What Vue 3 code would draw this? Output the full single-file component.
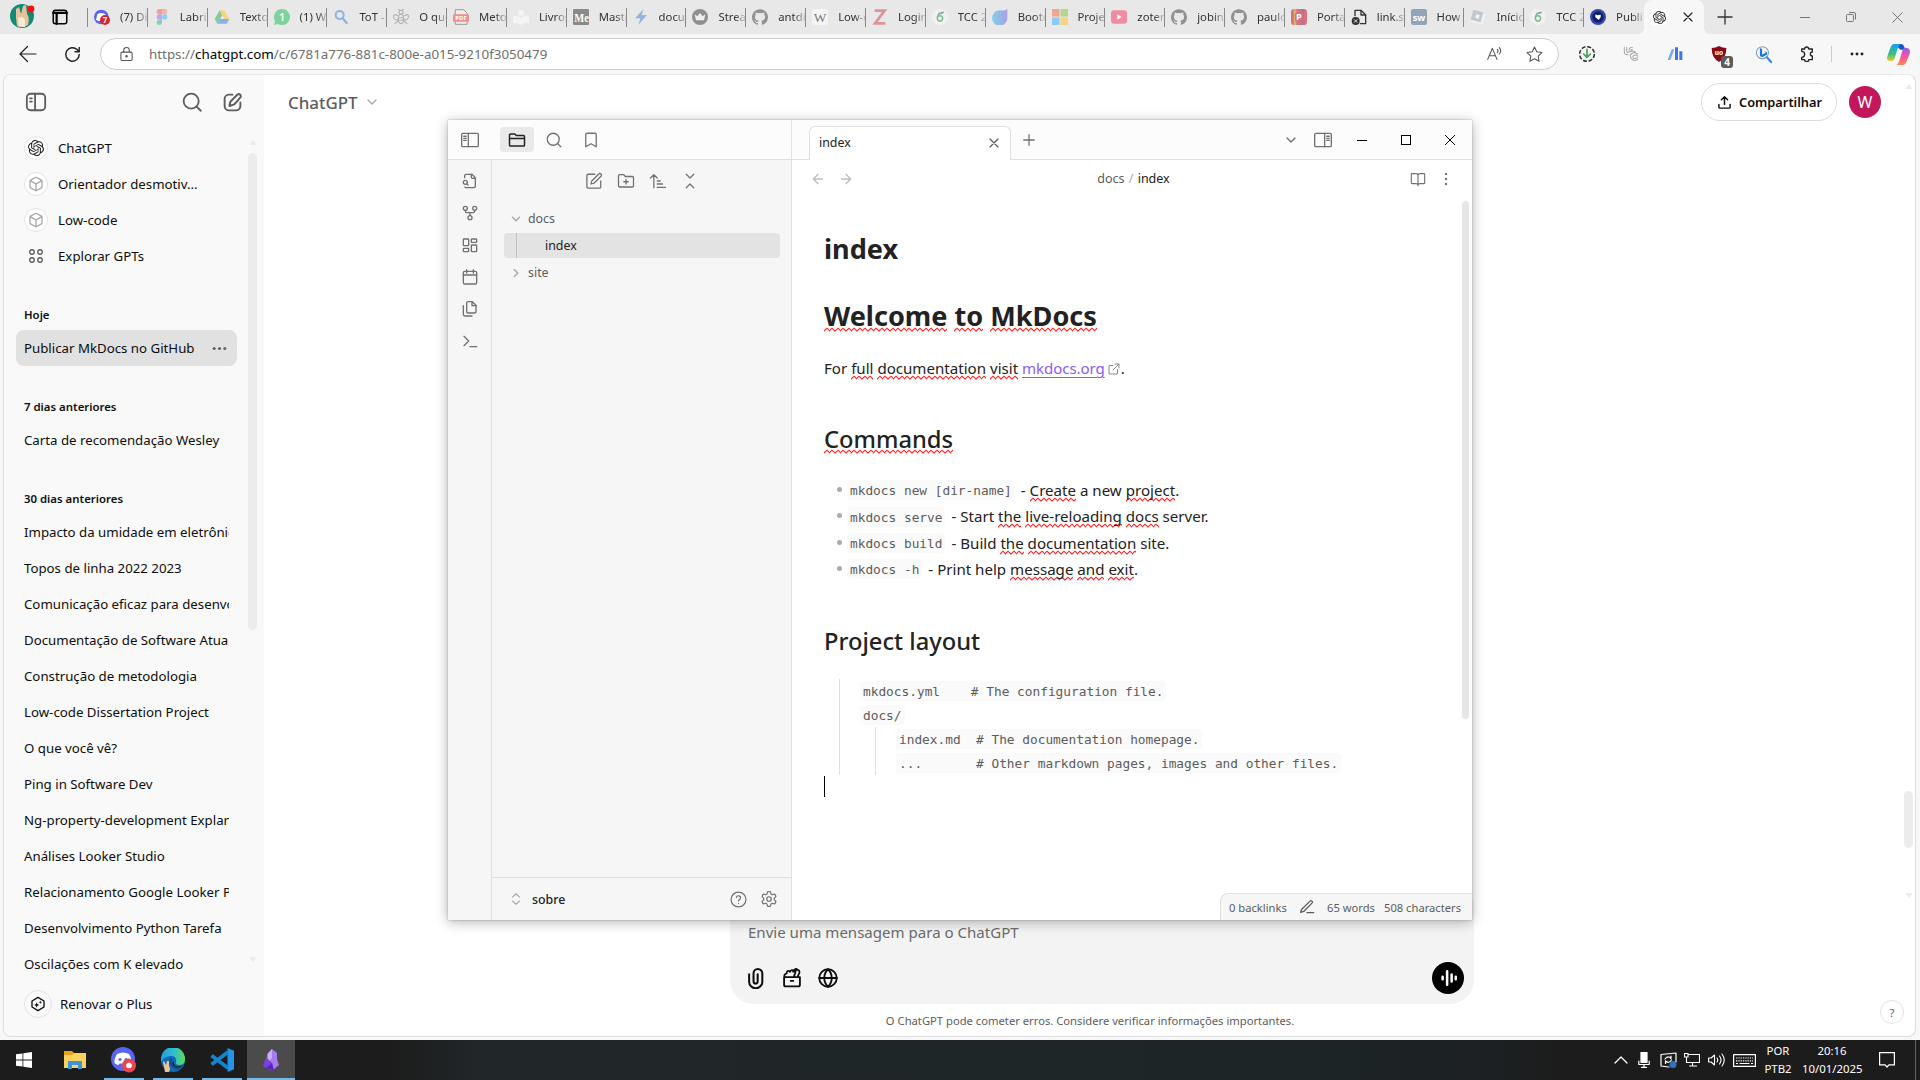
<script setup>
const openai = '<path fill="currentColor" stroke="none" d="M22.2819 9.8211a5.9847 5.9847 0 0 0-.5157-4.9108 6.0462 6.0462 0 0 0-6.5098-2.9A6.0651 6.0651 0 0 0 4.9807 4.1818a5.9847 5.9847 0 0 0-3.9977 2.9 6.0462 6.0462 0 0 0 .7427 7.0966 5.98 5.98 0 0 0 .511 4.9107 6.051 6.051 0 0 0 6.5146 2.9001A5.9847 5.9847 0 0 0 13.2599 24a6.0557 6.0557 0 0 0 5.7718-4.2058 5.9894 5.9894 0 0 0 3.9977-2.9001 6.0557 6.0557 0 0 0-.7475-7.0729zm-9.022 12.6081a4.4755 4.4755 0 0 1-2.8764-1.0408l.1419-.0804 4.7783-2.7582a.7948.7948 0 0 0 .3927-.6813v-6.7369l2.02 1.1686a.071.071 0 0 1 .038.052v5.5826a4.504 4.504 0 0 1-4.4945 4.4944zm-9.6607-4.1254a4.4708 4.4708 0 0 1-.5346-3.0137l.142.0852 4.783 2.7582a.7712.7712 0 0 0 .7806 0l5.8428-3.3685v2.3324a.0804.0804 0 0 1-.0332.0615L9.74 19.9502a4.4992 4.4992 0 0 1-6.1408-1.6464zM2.3408 7.8956a4.485 4.485 0 0 1 2.3655-1.9728V11.6a.7664.7664 0 0 0 .3879.6765l5.8144 3.3543-2.0201 1.1685a.0757.0757 0 0 1-.071 0l-4.8303-2.7865A4.504 4.504 0 0 1 2.3408 7.872zm16.5963 3.8558L13.1038 8.364 15.1192 7.2a.0757.0757 0 0 1 .071 0l4.8303 2.7913a4.4944 4.4944 0 0 1-.6765 8.1042v-5.6772a.79.79 0 0 0-.407-.667zm2.0107-3.0231l-.142-.0852-4.7735-2.7818a.7759.7759 0 0 0-.7854 0L9.409 9.2297V6.8974a.0662.0662 0 0 1 .0284-.0615l4.8303-2.7866a4.4992 4.4992 0 0 1 6.6802 4.66zM8.3065 12.863l-2.02-1.1638a.0804.0804 0 0 1-.038-.0567V6.0742a4.4992 4.4992 0 0 1 7.3757-3.4537l-.142.0805L8.704 5.459a.7948.7948 0 0 0-.3927.6813zm1.0976-2.3654l2.602-1.4998 2.6069 1.4998v2.9994l-2.5974 1.4997-2.6067-1.4997Z"/>'
const github = '<path fill="#8f9194" stroke="none" d="M12 .297c-6.63 0-12 5.373-12 12 0 5.303 3.438 9.8 8.205 11.385.6.113.82-.258.82-.577 0-.285-.01-1.04-.015-2.04-3.338.724-4.042-1.61-4.042-1.61C4.422 18.07 3.633 17.7 3.633 17.7c-1.087-.744.084-.729.084-.729 1.205.084 1.838 1.236 1.838 1.236 1.07 1.835 2.809 1.305 3.495.998.108-.776.417-1.305.76-1.605-2.665-.3-5.466-1.332-5.466-5.93 0-1.31.465-2.38 1.235-3.22-.135-.303-.54-1.523.105-3.176 0 0 1.005-.322 3.3 1.23.96-.267 1.98-.399 3-.405 1.02.006 2.04.138 3 .405 2.28-1.552 3.285-1.23 3.285-1.23.645 1.653.24 2.873.12 3.176.765.84 1.23 1.91 1.23 3.22 0 4.61-2.805 5.625-5.475 5.92.42.36.81 1.096.81 2.22 0 1.606-.015 2.896-.015 3.286 0 .315.21.69.825.57C20.565 22.092 24 17.592 24 12.297c0-6.627-5.373-12-12-12"/>'
const overleaf = '<circle cx="12" cy="12" r="12" fill="#f0f1f0" stroke="none"/><path d="M17 5c-5 0-9 4-9 8.500a4 4 0 1 0 4-3.500c-2 0-3.500 1-4 3M10 6.500c3 1 5 .5 7-1.500" stroke="#7fb795" stroke-width="2.200"/>'

const fav = {
  discord: '<circle cx="11" cy="12" r="11" fill="#5865f2" stroke="none"/><path fill="#fff" stroke="none" d="M5 8q6-4 12 0l2 8-3 2H6l-3-2z"/><circle cx="16.500" cy="16.500" r="7.500" fill="#e0202a" stroke="none"/><text x="16.500" y="21" text-anchor="middle" font-size="12" font-weight="700" fill="#fff" stroke="none">7</text>',
  figma: '<g stroke="none"><path fill="#f0a091" d="M12 0H8a4 4 0 0 0 0 8h4z"/><path fill="#f4b5ab" d="M12 0h4a4 4 0 0 1 0 8h-4z"/><path fill="#c3a3f0" d="M12 8H8a4 4 0 0 0 0 8h4z"/><circle cx="16" cy="12" r="4" fill="#8fcff2"/><path fill="#85d4ae" d="M12 16H8a4 4 0 1 0 4 4z"/></g>',
  drive: '<g stroke="none"><path fill="#8ab2ea" d="M5 22h14l4-7H9z"/><path fill="#89c79e" d="M8.500 2 1 15l4 7 7.500-13z"/><path fill="#f2d683" d="M8.500 2h7L23 15h-7.500z"/></g>',
  whats: '<path fill="#7dd39a" stroke="none" d="M12 0a12 12 0 1 1-6 22.400L0 24l1.700-5.800A12 12 0 0 1 12 0"/><text x="12" y="18" text-anchor="middle" font-size="16" font-weight="600" fill="#fff" stroke="none">1</text>',
  lens: '<circle cx="10" cy="9" r="6" stroke="#8db3e2" stroke-width="3"/><path d="m14.500 14 6 7" stroke="#8db3e2" stroke-width="3.500"/>',
  bee: '<g stroke="#b2b2b2" stroke-width="1.600"><circle cx="12" cy="5" r="3"/><ellipse cx="12" cy="15" rx="4" ry="7"/><path d="M8 13h8M8 17h8M7 10Q0 6 1 12t7 3M17 10q7-4 6 2t-7 3M10 2 8 0M14 2l2-2M7 18l-4 4M17 18l4 4"/></g>',
  pdf: '<path d="M4 1h12l5 5v17H4z" fill="#eee" stroke="#999" stroke-width="1.500"/><rect x="0" y="8" width="24" height="11" rx="1.500" fill="#f08f8f" stroke="none"/><text x="12" y="17" text-anchor="middle" font-size="9" font-weight="700" fill="#fff" stroke="none">PDF</text>',
  book: '<g fill="#f5f5f5" stroke="none"><circle cx="12" cy="6" r="4.500"/><path d="M0 11q7-2 12 3 5-5 12-3v10q-7-1-12 3-5-4-12-3z"/></g>',
  me: '<rect width="24" height="24" rx="2" fill="#8a8a8a" stroke="none"/><text x="2" y="19" font-family="Liberation Serif" font-size="18" font-weight="700" fill="#fff" stroke="none" textLength="22" lengthAdjust="spacingAndGlyphs">Me</text>',
  bolt: '<path fill="#96b4e0" stroke="none" d="M16 0 3 14h8L8 24 21 9h-8z"/>',
  crown: '<circle cx="12" cy="12" r="12" fill="#8f8f91" stroke="none"/><path fill="#eee" stroke="none" d="m4 8 4 3 4-5 4 5 4-3-2 9H6z"/>',
  github,
  wiki: '<rect width="24" height="24" rx="4" fill="#f4f4f4" stroke="none"/><text x="12" y="19" text-anchor="middle" font-family="Liberation Serif" font-size="20" fill="#777" stroke="none">W</text>',
  z: '<path d="M4 2.500h15L4.500 21.500H20" stroke="#dd9298" stroke-width="4" stroke-linecap="butt" stroke-linejoin="miter"/>',
  overleaf,
  boot: '<defs><linearGradient id="bt" x1="0" x2="1"><stop offset="0" stop-color="#7fd0ec"/><stop offset="1" stop-color="#a9a2e2"/></linearGradient></defs><path fill="url(#bt)" stroke="none" d="M23 0v13a11.500 11.500 0 1 1-11-11q8 1 11-2"/>',
  ms: '<g stroke="none"><path fill="#f2a68f" d="M0 0h11.300v11.300H0z"/><path fill="#b7d58c" d="M12.700 0H24v11.300H12.700z"/><path fill="#8bcdee" d="M0 12.700h11.300V24H0z"/><path fill="#f5d585" d="M12.700 12.700H24V24H12.700z"/></g>',
  yt: '<rect x="0" y="2" width="24" height="20" rx="4.500" fill="#f18ba0" stroke="none"/><path fill="#fff" stroke="none" d="m9.500 8 6.500 4-6.500 4z"/>',
  porta: '<g stroke="none"><rect width="24" height="24" rx="5" fill="#d9707c"/><path fill="#d8b26c" d="M4 0h4v24H4z"/><path fill="#8c7fb0" d="M16 0h3v24h-3z"/><rect x="6" y="5" width="12" height="14" rx="3" fill="#d9707c"/></g><text x="12" y="17" text-anchor="middle" font-size="14" font-weight="700" fill="#fff" stroke="none">P</text>',
  link: '<path d="M6 10V2h9l7 7v13H14" stroke="#333" stroke-width="2"/><path d="M15 2v7h7" stroke="#333" stroke-width="2"/><circle cx="7" cy="18" r="6" fill="#333" stroke="none"/><path d="m5 16 4 4m0-4-4 4" stroke="#fff" stroke-width="1.300"/>',
  sw: '<rect width="24" height="24" rx="3" fill="#90a5b9" stroke="none"/><text x="12" y="18" text-anchor="middle" font-size="14" font-weight="700" fill="#fff" stroke="none">sw</text>',
  rob: '<path fill="#f1f1f1" stroke="none" d="m6 3 18 5-5 16L1 19z"/><path fill="#c3c8cd" stroke="none" d="m5 1 15 4-4 15L1 16z"/><path fill="#f6f6f6" stroke="none" d="m9.500 8 5 1.500-1.500 5-5-1.500z"/>',
  uf: '<circle cx="12" cy="12" r="12" fill="#3448b8" stroke="none"/><circle cx="12" cy="12" r="8.500" fill="#14205e" stroke="none"/><path fill="#fff" stroke="none" d="m8 8 3 1.500 5-1v4l-3 4-2-2-3-2z"/>',
}
const tabs = [
  ['discord', '(7) Discord'], ['figma', 'Labrinth'], ['drive', 'Textos'], ['whats', '(1) Whats'], ['lens', 'ToT - Se'],
  ['bee', 'O que é'], ['pdf', 'Metodo'], ['book', 'Livros d'], ['me', 'Master'], ['bolt', 'docume'], ['crown', 'Stream'],
  ['github', 'antdig'], ['wiki', 'Low-co'], ['z', 'Login -'], ['overleaf', 'TCC 20'], ['boot', 'Bootca'], ['ms', 'Projeto'],
  ['yt', 'zotero'], ['github', 'jobinte'], ['github', 'paulow'], ['porta', 'Portal d'], ['link', 'link.spr'], ['sw', 'How to'],
  ['rob', 'Início –'], ['overleaf', 'TCC 20'], ['uf', 'Publica'],
]
const ic = {
  openai,
  cube: '<path d="M21 16V8a2 2 0 0 0-1-1.730l-7-4a2 2 0 0 0-2 0l-7 4A2 2 0 0 0 3 8v8a2 2 0 0 0 1 1.730l7 4a2 2 0 0 0 2 0l7-4A2 2 0 0 0 21 16zM3.300 7 12 12l8.700-5M12 22V12"/>',
  four: '<circle cx="6" cy="6" r="3.400"/><circle cx="18" cy="6" r="3.400"/><circle cx="6" cy="18" r="3.400"/><circle cx="18" cy="18" r="3.400"/>',
  search: '<circle cx="11" cy="11" r="8"/><path d="m21 21-4.300-4.300"/>',
  gsearch: '<circle cx="11" cy="11" r="9"/><path d="m22.500 22.500-5-5"/>',
  compose: '<path d="M12 3H8a5 5 0 0 0-5 5v8a5 5 0 0 0 5 5h8a5 5 0 0 0 5-5v-4"/><path d="M17.500 3.200a2.300 2.300 0 0 1 3.300 3.300c-3 3-4 5.500-7.500 8L8.500 16l1-4.800c3-3.500 5-5 8-8z"/>',
  gside: '<rect x="2" y="3" width="20" height="18" rx="4"/><path d="M11 3v18M5.500 8h2M5.500 11.500h2"/>',
  panel: '<rect x="2" y="4" width="20" height="16" rx="1.500"/><path d="M10 4v16M4.500 7.500H7.500M4.500 10H7.500M4.500 12.500H7.500"/>',
  panelr: '<rect x="2" y="4" width="20" height="16" rx="1.500"/><path d="M14 4v16M16.500 7.500h3M16.500 10h3M16.500 12.500h3"/>',
  folder: '<path d="M2 10h20M3.500 20h17a1.500 1.500 0 0 0 1.500-1.500v-11A1.500 1.500 0 0 0 20.500 6H11L9 4H3.500A1.500 1.500 0 0 0 2 5.500v13A1.500 1.500 0 0 0 3.500 20z"/>',
  bookmark: '<path d="m19 21-7-4-7 4V5a2 2 0 0 1 2-2h10a2 2 0 0 1 2 2z"/>',
  filesearch: '<path d="M14 2v4a2 2 0 0 0 2 2h4"/><path d="M4.270 21a2 2 0 0 0 1.730 1h12a2 2 0 0 0 2-2V7l-5-5H6a2 2 0 0 0-2 2v3"/><path d="m9 18-1.500-1.500"/><circle cx="5" cy="14" r="3"/>',
  fork: '<circle cx="12" cy="19" r="3"/><circle cx="5" cy="5" r="3"/><circle cx="19" cy="5" r="3"/><path d="M19 8v1.500a2 2 0 0 1-2 2H7a2 2 0 0 1-2-2V8M12 11.500V16"/>',
  dash: '<rect x="2" y="3" width="8" height="10" rx="1"/><rect x="14" y="3" width="8" height="5" rx="1"/><rect x="14" y="12" width="8" height="10" rx="1"/><rect x="2" y="17" width="8" height="5" rx="1"/>',
  cal: '<path d="M7 1v5M17 1v5M2 9h20"/><rect x="2" y="3.500" width="20" height="19" rx="2"/>',
  copy: '<path d="M15.500 1H9a2 2 0 0 0-2 2v13a2 2 0 0 0 2 2h10a2 2 0 0 0 2-2V6.500z"/><path d="M15 1v6h6M2 7v13a2.500 2.500 0 0 0 2.500 2.500H15"/>',
  term: '<path d="m3 19 7-7-7-7M12 20.500h10"/>',
  edit: '<path d="M13 3H4a1.500 1.500 0 0 0-1.500 1.500v15.500A1.500 1.500 0 0 0 4 21.500h15.500a1.500 1.500 0 0 0 1.500-1.500V12"/><path d="M18.400 2.600a2 2 0 0 1 3 3L12 15l-4 1 1-4z"/>',
  newfolder: '<path d="M12 10v6M9 13h6M3.500 20h17a1.500 1.500 0 0 0 1.500-1.500v-11A1.500 1.500 0 0 0 20.500 6H11L9 3.500H3.500A1.500 1.500 0 0 0 2 5v13.500A1.500 1.500 0 0 0 3.500 20z"/>',
  sort: '<path d="m2 8 4.500-4.500L11 8M6.500 4v17M11 12h4M11 16h7M11 20.500h11"/>',
  collapse: '<path d="m7 21 5-5 5 5M7 3l5 5 5-5"/>',
  x: '<path d="M18 6 6 18M6 6l12 12"/>',
  plus: '<path d="M5 12h14M12 5v14"/>',
  down: '<path d="m6 9 6 6 6-6"/>',
  right: '<path d="m9 18 6-6-6-6"/>',
  updown: '<path d="m6 15.500 6 5.500 6-5.500M6 8.500 12 3l6 5.500"/>',
  al: '<path d="m12 19-7-7 7-7M19 12H5"/>',
  ar: '<path d="M5 12h14M12 5l7 7-7 7"/>',
  book: '<path d="M12 6v16M3 4h6a3 3 0 0 1 3 2.500A3 3 0 0 1 15 4h6a1 1 0 0 1 1 1v13a1 1 0 0 1-1 1h-6q-3 0-3 2 0-2-3-2H3a1 1 0 0 1-1-1V5a1 1 0 0 1 1-1z"/>',
  dots: '<g fill="currentColor" stroke="none"><circle cx="12" cy="4.500" r="1.800"/><circle cx="12" cy="12" r="1.800"/><circle cx="12" cy="19.500" r="1.800"/></g>',
  hdots: '<g fill="currentColor" stroke="none"><circle cx="4.500" cy="12" r="2.200"/><circle cx="12" cy="12" r="2.200"/><circle cx="19.500" cy="12" r="2.200"/></g>',
  ext: '<path d="M14 2h8v8M10 14 22 2M19 13v8a1 1 0 0 1-1 1H3a1 1 0 0 1-1-1V6a1 1 0 0 1 1-1h7"/>',
  help: '<circle cx="12" cy="12" r="10.500"/><path d="M9 9a3 3 0 0 1 5.900 1c0 2-2.900 2.500-2.900 4M12 17.500v.2"/>',
  gear: '<path d="M10 2.500q2-1 4 0l.6 2.700 1.900 1.100 2.700-.9q1.700 1.400 2 3.500l-2.100 1.900v2.400l2.100 1.900q-.3 2.100-2 3.500l-2.700-.9-1.900 1.100-.6 2.700q-2 1-4 0l-.6-2.700-1.900-1.100-2.700.9q-1.700-1.400-2-3.500l2.100-1.900v-2.400L2.800 8.900q.3-2.100 2-3.500l2.700.9 1.900-1.100z"/><circle cx="12" cy="12" r="3"/>',
  pen: '<path d="M12 20.500h10M16.500 3.200a2.100 2.100 0 0 1 3 3L7 18.700l-4.500 1.300 1.300-4.200z"/>',
  clip: '<path d="M4.500 8v8a7.200 7.200 0 0 0 14.400 0V7a4.800 4.800 0 0 0-9.600 0v8.700a2.200 2.200 0 0 0 4.500 0V8"/>',
  box: '<path d="M2.500 11h19v9a2 2 0 0 1-2 2h-15a2 2 0 0 1-2-2zM10.500 15.500h3M3.500 11c-2-3 1-4 2-4.500 0-3 2-4 4-2 2-3 4-2 4 0 1-3 2.500-3.500 4-3.500-1.500 2-1.500 4-2 6l-1.500 4M15 4c3-3 6-2 6 1 0 2-2 3-2 6"/>',
  globe: '<circle cx="12" cy="12" r="10.500"/><path d="M1.500 12h21M12 1.500c-6 6-6 15 0 21M12 1.500c6 6 6 15 0 21"/>',
  upload: '<path d="M12 15V3M7 7.500 12 3l5 4.500M3 15v4a2 2 0 0 0 2 2h14a2 2 0 0 0 2-2v-4"/>',
  hex: '<path d="M21 16.500v-9L12 2 3 7.500v9L12 22z"/><path fill="currentColor" stroke="none" d="M10 9.500l1.200 2.800 2.800 1.200-2.800 1.200L10 17.500l-1.200-2.800L6 13.500l2.800-1.200zM15.500 7l.7 1.800 1.800.7-1.800.7-.7 1.800-.7-1.800-1.800-.7 1.800-.7z"/>',
  voice: '<path stroke="#fff" d="M3.500 10.500v3M9.500 3v18M15.500 7.500v9M21 10.500v3"/>',
  refresh: '<path d="M21.500 12A9.500 9.500 0 1 1 18.500 5l3 3M21.500 2v6h-6"/>',
  lock: '<rect x="3" y="9" width="18" height="13.500" rx="2"/><path d="M7.500 9V6a4.500 4.500 0 0 1 9 0v3"/><circle cx="12" cy="15.500" r="1.200" fill="currentColor"/>',
  star: '<path d="m12 1.500 3.200 6.700 7.300 1-5.300 5.100 1.300 7.300L12 18l-6.500 3.600 1.300-7.300L1.500 9.200l7.300-1z"/>',
  read: '<path d="M1 20 8 3.500 15 20M3.500 14.500h9M15.500 5q2 2.500 0 5M18.500 2.500q4 5 0 9.500"/>',
  wtab: '<rect x="3" y="3" width="18" height="18" rx="3"/><path d="M3 6.500h18M7.500 7v14" stroke-width="3"/>',
  puzzle: '<path d="M4 8V4.500h4.500a3 3 0 0 1 6 0H20V9a3 3 0 1 0 0 6v5.500h-5.500a3 3 0 0 1-6 0H4V17M4 8a4.500 4.500 0 0 1 0 9"/>',
  dl: '<circle cx="12" cy="12" r="11" stroke="#333" stroke-width="2.400" stroke-linecap="butt" stroke-dasharray="6 2.640"/><path stroke="#47a05d" stroke-width="2.600" d="M12 5v12m-5-5 5 5 5-5"/>',
  uc: '<g stroke="#aaa" stroke-width="1.600"><path d="M2 2v6q0 6 6 5M5.500 2v6q0 2 2.500 2M14 2q-5 0-5 5M14 5q-2 0-2 2"/><path d="M22 12c-7-5-13 1-10 6s8 4 10 2M22 15c-4-3-8-1-7 2s5 2 7 0M9 9q8-3 10 1"/></g>',
  bars: '<g stroke="none"><path fill="#79a9f7" d="M7 5h4L5 21H1z"/><path fill="#3b76ee" d="M12 2h4.500v19H12zM18.500 8H23v13h-4.500z"/></g>',
  ub: '<path fill="#8b0912" stroke="none" d="M12 0q5 3 11 3 0 15-11 21Q1 18 1 3q6 0 11-3"/><text x="12" y="14" text-anchor="middle" font-size="10" font-weight="700" fill="#fff" stroke="none">uo</text>',
  bing: '<circle cx="10.500" cy="9.500" r="8.500" stroke="#8aa0b8" stroke-width="1.600"/><path d="m17 16 6 7" stroke="#2a83f0" stroke-width="3"/><path fill="#1477ea" stroke="none" d="M7 3l3 1v8l5-2-2-3 4 2v3l-7 4-3-2z"/>',
  copilot: '<defs><linearGradient id="cp1" x2="0" y2="1"><stop stop-color="#18a0f0"/><stop offset=".6" stop-color="#3fc07a"/><stop offset="1" stop-color="#f3c82c"/></linearGradient><linearGradient id="cp2" x2="0" y2="1"><stop stop-color="#9a5cf0"/><stop offset=".5" stop-color="#f0569a"/><stop offset="1" stop-color="#ff8b4a"/></linearGradient></defs><g stroke="none"><path fill="#1b55cf" d="M8 1h7q2 0 3 3l1 3h-5z"/><path fill="url(#cp1)" d="M7 1h7q-2 1-3 5L8 16q-1 3-3 3-5 0-5-3 0-2 4-12 1-3 3-3"/><path fill="url(#cp2)" d="M17 23h-7q2-1 3-5l3-10q1-3 3-3 5 0 5 4 0 2-4 11-1 3-3 3"/></g>',
}
const gpts = [['openai', 'ChatGPT'], ['cube', 'Orientador desmotiv...'], ['cube', 'Low-code'], ['four', 'Explorar GPTs']]
const chats = ['Impacto da umidade em eletrônicos', 'Topos de linha 2022 2023', 'Comunicação eficaz para desenvolvedores', 'Documentação de Software Atualizada', 'Construção de metodologia', 'Low-code Dissertation Project', 'O que você vê?', 'Ping in Software Dev', 'Ng-property-development Explanation', 'Análises Looker Studio', 'Relacionamento Google Looker Power', 'Desenvolvimento Python Tarefa', 'Oscilações com K elevado']
const ribbon = ['filesearch', 'fork', 'dash', 'cal', 'copy', 'term']
const actions = ['edit', 'newfolder', 'sort', 'collapse']
const rootFiles = ['mkdocs.yml    # The configuration file.', 'docs/']
const docFiles = ['index.md  # The documentation homepage.', '...       # Other markdown pages, images and other files.']
</script>

<template>
  <div class="desktop">
    <header class="tabbar">
      <div class="profile">
        <svg width="26" height="28" viewBox="0 0 26 28"><circle cx="12" cy="16" r="12" fill="#128a78" /><path fill="#e8c39a" d="M6 9l3-2 2 7 2-8 3-1 1 9q3 3 1 11-6 4-11 1l-1-8z" /><path fill="#f6ead8" d="M8 18q5-3 7 2l0 7-6-1z" /><circle cx="21" cy="9" r="3.400" fill="#fb0d10" /></svg>
      </div>
      <div class="wtab"><svg class="i" width="18" height="18" viewBox="0 0 24 24" v-html="ic.wtab" /></div>
      <div class="tabs">
        <div v-for="(t, n) in tabs" :key="n" class="tab">
          <svg class="i fav" width="16" height="16" viewBox="0 0 24 24" v-html="fav[t[0]]" />
          <span>{{ t[1] }}</span>
        </div>
      </div>
      <div class="active-tab">
        <span class="favbox"><svg class="i" width="13" height="13" viewBox="0 0 24 24" v-html="ic.openai" /></span>
        <svg class="i" width="16" height="16" viewBox="0 0 24 24" stroke-width="1.8" v-html="ic.x" />
      </div>
      <div class="newtab"><svg class="i" width="24" height="24" viewBox="0 0 24 24" stroke-width="1.3" v-html="ic.plus" /></div>
      <div class="winctl">
        <svg width="10" height="10"><path d="M0 5.500h10" stroke="#777" /></svg>
        <svg width="10" height="10" fill="none" stroke="#777"><rect x=".5" y="2.500" width="7" height="7" rx="1" /><path d="M3 .5h5q1.500 0 1.500 1.500v5.500" /></svg>
        <svg width="11" height="11"><path d="m.5.500 10 10m0-10-10 10" stroke="#777" /></svg>
      </div>
    </header>

    <div class="toolbar">
      <svg class="i back" width="20" height="20" viewBox="0 0 20 20" stroke-width="1.2"><path d="M18 10H2.500M9.500 2.500 2 10l7.500 7.500" /></svg>
      <svg class="i reload" width="17" height="17" viewBox="0 0 24 24" v-html="ic.refresh" />
      <div class="address">
        <svg class="i lock" width="15" height="16" viewBox="0 0 24 24" stroke-width="1.7" v-html="ic.lock" />
        <span class="url">https://<b>chatgpt.com</b>/c/6781a776-881c-800e-a015-9210f3050479</span>
        <svg class="i" width="16" height="16" viewBox="0 0 24 24" stroke-width="1.6" v-html="ic.read" />
        <svg class="i star" width="17" height="17" viewBox="0 0 24 24" stroke-width="1.5" v-html="ic.star" />
      </div>
      <div class="exts">
        <span><svg class="i" width="16" height="16" viewBox="0 0 24 24" v-html="ic.dl" /></span>
        <span><svg class="i" width="16" height="16" viewBox="0 0 24 24" v-html="ic.uc" /></span>
        <span><svg class="i" width="16" height="16" viewBox="0 0 24 24" v-html="ic.bars" /></span>
        <span class="shield"><svg class="i" width="16" height="16" viewBox="0 0 24 24" v-html="ic.ub" /><em>4</em></span>
        <span><svg class="i" width="17" height="17" viewBox="0 0 24 24" v-html="ic.bing" /></span>
        <span><svg class="i" width="16" height="16" viewBox="0 0 24 24" v-html="ic.puzzle" /></span>
      </div>
      <i class="vsep" />
      <svg class="i more" width="16" height="16" viewBox="0 0 24 24" v-html="ic.hdots" />
      <svg class="i copilot" width="23" height="23" viewBox="0 0 24 24" v-html="ic.copilot" />
    </div>

    <div class="page">
      <aside class="side">
        <div class="side-head">
          <svg class="i" width="22" height="22" viewBox="0 0 24 24" v-html="ic.gside" />
          <svg class="i find" width="20" height="20" viewBox="0 0 24 24" stroke-width="2.2" v-html="ic.gsearch" />
          <svg class="i new" width="21" height="21" viewBox="0 0 24 24" stroke-width="2.2" v-html="ic.compose" />
        </div>
        <div class="side-body">
          <div class="list">
            <div v-for="g in gpts" :key="g[1]" class="gpt">
              <span class="ring" :class="g[0]"><svg class="i" width="16" height="16" viewBox="0 0 24 24" v-html="ic[g[0]]" /></span>{{ g[1] }}
            </div>
            <h6>Hoje</h6>
            <div class="chat sel"><span>Publicar MkDocs no GitHub</span><svg class="i" width="17" height="17" viewBox="0 0 24 24" v-html="ic.hdots" /></div>
            <h6>7 dias anteriores</h6>
            <div class="chat"><span>Carta de recomendação Wesley</span></div>
            <h6>30 dias anteriores</h6>
            <div v-for="c in chats" :key="c" class="chat"><span>{{ c }}</span></div>
          </div>
          <div class="sb"><i class="up" /><i class="thumb" /><i class="dn" /></div>
        </div>
        <div class="plus"><span><svg class="i" width="16" height="16" viewBox="0 0 24 24" v-html="ic.hex" /></span>Renovar o Plus</div>
      </aside>
      <main class="chatmain">
        <div class="chat-head">
          <h1>ChatGPT</h1>
          <svg class="i chev" width="16" height="16" viewBox="0 0 24 24" v-html="ic.down" />
          <button class="share"><svg class="i" width="15" height="15" viewBox="0 0 24 24" stroke-width="2.3" v-html="ic.upload" />Compartilhar</button>
          <span class="avatar">W</span>
        </div>
        <div class="composer">
          <p>Envie uma mensagem para o ChatGPT</p>
          <div class="crow">
            <svg class="i" width="22" height="22" viewBox="0 0 24 24" stroke-width="2.2" v-html="ic.clip" />
            <svg class="i" width="20" height="20" viewBox="0 0 24 24" stroke-width="2.2" v-html="ic.box" />
            <svg class="i" width="20" height="20" viewBox="0 0 24 24" stroke-width="2.2" v-html="ic.globe" />
            <span class="voice"><svg class="i" width="18" height="18" viewBox="0 0 24 24" stroke-width="3.4" v-html="ic.voice" /></span>
          </div>
        </div>
        <div class="note">O ChatGPT pode cometer erros. Considere verificar informações importantes.</div>
        <span class="qm">?</span>
      </main>
      <div class="pagesb"><i class="up" /><i class="thumb" /><i class="dn" /></div>
    </div>

    <section class="win">
      <div class="wl">
        <div class="wl-head">
          <span class="c0"><svg class="i" width="20" height="20" viewBox="0 0 24 24" stroke-width="1.6" v-html="ic.panel" /></span>
          <span class="c1"><svg class="i" width="18" height="18" viewBox="0 0 24 24" v-html="ic.folder" /></span>
          <span class="c2"><svg class="i" width="18" height="18" viewBox="0 0 24 24" stroke-width="1.7" v-html="ic.search" /></span>
          <span class="c3"><svg class="i" width="18" height="18" viewBox="0 0 24 24" stroke-width="1.7" v-html="ic.bookmark" /></span>
        </div>
        <div class="wl-body">
          <nav class="ribbon"><svg v-for="r in ribbon" :key="r" class="i" width="16" height="16" viewBox="0 0 24 24" v-html="ic[r]" /></nav>
          <div class="files">
            <div class="acts"><svg v-for="a in actions" :key="a" class="i" width="18" height="18" viewBox="0 0 24 24" stroke-width="1.7" v-html="ic[a]" /></div>
            <div class="trow"><svg class="i" width="14" height="14" viewBox="0 0 24 24" stroke-width="2.6" v-html="ic.down" />docs</div>
            <div class="trow on">index</div>
            <div class="trow"><svg class="i" width="14" height="14" viewBox="0 0 24 24" stroke-width="2.6" v-html="ic.right" />site</div>
            <div class="vault">
              <svg class="i ud" width="14" height="14" viewBox="0 0 24 24" v-html="ic.updown" /><span>sobre</span>
              <svg class="i" width="17" height="17" viewBox="0 0 24 24" stroke-width="1.7" v-html="ic.help" />
              <svg class="i" width="18" height="18" viewBox="0 0 24 24" stroke-width="1.6" v-html="ic.gear" />
            </div>
          </div>
        </div>
      </div>
      <div class="wr">
        <div class="wr-head">
          <i class="lead" />
          <div class="otab"><span>index</span><svg class="i" width="16" height="16" viewBox="0 0 24 24" stroke-width="1.8" v-html="ic.x" /></div>
          <div class="rest">
            <svg class="i np" width="18" height="18" viewBox="0 0 24 24" stroke-width="1.7" v-html="ic.plus" />
            <svg class="i ch" width="16" height="16" viewBox="0 0 24 24" v-html="ic.down" />
            <svg class="i pr" width="20" height="20" viewBox="0 0 24 24" stroke-width="1.6" v-html="ic.panelr" />
            <span class="wc"><svg width="10" height="10"><path d="M0 5.500h10" stroke="#000" /></svg></span>
            <span class="wc"><svg width="10" height="10"><rect x=".5" y=".5" width="9" height="9" fill="none" stroke="#000" /></svg></span>
            <span class="wc"><svg width="10" height="10"><path d="m0 0 10 10M10 0 0 10" stroke="#000" /></svg></span>
          </div>
        </div>
        <div class="vh">
          <div class="nav"><svg class="i" width="16" height="16" viewBox="0 0 24 24" v-html="ic.al" /><svg class="i" width="16" height="16" viewBox="0 0 24 24" v-html="ic.ar" /></div>
          <div class="crumb">docs <s>/</s> <b>index</b></div>
          <div class="va"><svg class="i" width="16" height="16" viewBox="0 0 24 24" stroke-width="1.7" v-html="ic.book" /><svg class="i" width="16" height="16" viewBox="0 0 24 24" v-html="ic.dots" /></div>
        </div>
        <article class="doc">
          <h1>index</h1>
          <h1 class="w"><u>Welcome</u> <u>to</u> <u>MkDocs</u></h1>
          <p class="para">For <u>full</u> <u>documentation</u> <u>visit</u> <a>mkdocs.org</a><svg class="i ext" width="12" height="12" viewBox="0 0 24 24" v-html="ic.ext" />.</p>
          <h2><u>Commands</u></h2>
          <ul>
            <li><code>mkdocs new [dir-name]</code><span>- <u>Create</u> a new <u>project</u>.</span></li>
            <li><code>mkdocs serve</code><span>- Start <u>the</u> <u>live-reloading</u> <u>docs</u> server.</span></li>
            <li><code>mkdocs build</code><span>- Build <u>the</u> <u>documentation</u> site.</span></li>
            <li><code>mkdocs -h</code><span>- Print help <u>message</u> <u>and</u> <u>exit</u>.</span></li>
          </ul>
          <h2 class="pl">Project layout</h2>
          <div class="block">
            <div v-for="l in rootFiles" :key="l" class="line"><code>{{ l }}</code></div>
            <div class="nest">
              <div v-for="l in docFiles" :key="l" class="line"><code>{{ l }}</code></div>
            </div>
          </div>
          <i class="caret" />
        </article>
        <i class="docsb" />
        <footer class="status"><span class="links">0 backlinks</span><svg class="i" width="16" height="16" viewBox="0 0 24 24" v-html="ic.pen" /><span class="words">65 words</span><span>508 characters</span></footer>
      </div>
    </section>

    <footer class="taskbar">
      <div class="tb start"><svg width="16" height="16" viewBox="0 0 16 16" fill="#fff"><path d="M0 2.300 6.500 1.400v6.200H0zM7.300 1.300 16 0v7.600H7.300zM0 8.400h6.500v6.200L0 13.700zM7.300 8.400H16V16l-8.700-1.300z" /></svg></div>
      <div class="tb"><svg width="22" height="18" viewBox="0 0 22 18"><path fill="#e9a41b" d="M0 0h8l2 2v4H0z" /><path fill="#fbd25f" d="M0 4h8l2-2h12v15H0z" /><path fill="#3b97dc" d="M4 10h14v8h-4v-4H8v4H4z" /></svg></div>
      <div class="tb run"><svg width="26" height="26" viewBox="0 0 26 26"><circle cx="12" cy="12" r="12" fill="#5865f2" /><path fill="#fff" d="M6 7q6-3 12 0 3 5 2.500 9-2 2-4 2l-1-1.500h-7L7.500 18q-2 0-4-2Q3 12 6 7" /><circle cx="9" cy="12.500" r="1.600" fill="#5865f2" /><circle cx="15" cy="12.500" r="1.600" fill="#5865f2" /><circle cx="18" cy="18.500" r="7" fill="#e8484d" /><circle cx="18" cy="18.500" r="2.800" fill="#fff" /></svg></div>
      <div class="tb run"><svg width="24" height="24" viewBox="0 0 24 24"><defs><linearGradient id="eg" x2="1"><stop stop-color="#1d9fe0" /><stop offset=".6" stop-color="#35c1c9" /><stop offset="1" stop-color="#5fdc4c" /></linearGradient></defs><circle cx="12" cy="12" r="12" fill="#1369b8" /><path fill="url(#eg)" d="M0 11A12 12 0 0 1 24 11q0 6-6 6-4 0-3-3 1-7-6-6-6 1-9 6z" /><path fill="#1c1c1c" d="M13 13q-1 3 2 5 4 1 7-1-2 3-6 3-5-1-5-5z" /><path fill="#0c4f93" d="M9 10q-3 8 5 11 4 1 7-2-4 1-8-1-3-3-1-7z" /><path fill="#e8c39a" d="M2 14l1-1 2 4 1-4 2 0 0 5q2 3 0 6H4z" /></svg></div>
      <div class="tb run"><svg width="24" height="24" viewBox="0 0 24 24"><path fill="#2196e8" d="M17.500 0 24 2.800v18.400L17.500 24z" /><path d="M1.500 7.500 18 20M1.500 16.500 18 4" stroke="#1385d0" stroke-width="3.600" fill="none" /></svg></div>
      <div class="tb run cur"><svg width="16" height="22" viewBox="0 0 16 22"><path fill="#a77bf0" d="M9 0 4 5v6l6 10 6-5-2-6V4z" /><path fill="#c9aef8" d="M9 0v9l-4 5V5z" /><path fill="#7a43d8" d="m3 8-3 9 6 4 5 1-2-8z" /><path fill="#5a25b8" d="m9 14 2 8-8-3z" /></svg></div>
      <div class="tray">
        <svg class="i" width="14" height="14" viewBox="0 0 14 14" stroke-width="1.3"><path d="m1 10 6-6 6 6" /></svg>
        <svg class="i mic" width="12" height="16" viewBox="0 0 12 16" stroke-width="1.2"><rect x="3" y=".5" width="6" height="10" fill="#fff" /><path d="M.8 9v3.500h10.400V9M6 12.500v3M3.500 15.400h5" /></svg>
        <svg class="i sync" width="17" height="16" viewBox="0 0 17 16" stroke-width="1.2"><path d="M9 15 1 14V2.500L16 1v9" /><path d="M5 7q3-4 6-.5V4M11.500 8q-3 4-6 1v2.500" /><circle cx="13" cy="12.500" r="3.500" fill="#2f73bf" stroke="none" /></svg>
        <svg class="i net" width="16" height="14" viewBox="0 0 16 14" stroke-width="1.1"><path d="M4.500 1.500h11v8h-13V5M8.500 9.500v3.500M5.500 13h7M.5.500h3.500v3.500H.5z" /></svg>
        <svg class="i vol" width="17" height="14" viewBox="0 0 17 14" stroke-width="1.1"><path d="M.6 5v4h2.500L6.500 12V2L3.100 5zM9 5q1.500 2 0 4M11.500 3q3 4 0 8M14 1q4.500 6 0 12" /></svg>
        <svg class="i kb" width="23" height="13" viewBox="0 0 23 13" stroke-width="1.2"><rect x=".6" y=".6" width="21.800" height="11.800" /><g stroke-linecap="butt"><path d="M3 4h17M3 6.800h17" stroke-dasharray="1.300 1" /><path d="M3 9.500h2M6.500 9.500h10M18 9.500h2" /></g></svg>
        <div class="lang">POR<br />PTB2</div>
        <div class="clock">20:16<br />10/01/2025</div>
        <svg class="notif" width="16" height="16" viewBox="0 0 16 16" fill="none" stroke="#fff" stroke-width="1.2"><path d="M.6.600h14.800v12.200H10L8 15l-2-2.200H.6z" /></svg>
        <i class="peek" />
      </div>
    </footer>
  </div>
</template>

<style>
body { margin: 0; overflow: hidden; }
</style>

<style scoped>
* { box-sizing: border-box; }
.desktop { position: relative; width: 1920px; height: 1080px; display: flex; flex-direction: column; background: #f7f7f7; font-family: "Noto Sans", "Open Sans", sans-serif; font-size: 13.300px; color: #0d0d0d; overflow: hidden; white-space: nowrap; stroke-width: 2; }
.i { display: block; flex: none; fill: none; stroke: currentColor; stroke-linecap: round; stroke-linejoin: round; }

/* browser chrome */
.tabbar { height: 34px; flex: none; display: flex; background: #e8e8e8; }
.profile { width: 46px; padding-left: 10px; }
.wtab { width: 41px; padding: 8px 0 0 5px; color: #000; }
.tabs { display: flex; width: 1557px; border-left: 1px solid transparent; background: linear-gradient(#888, #888) 0 8px / 1px 19px no-repeat border-box; }
.tab { flex: 1 1 0; min-width: 0; display: flex; align-items: center; padding-left: 6px; background: linear-gradient(#888, #888) right 8px / 1px 19px no-repeat; }
.tab:last-child { background: none; }
.tab span { margin-left: 10px; width: 27px; overflow: hidden; font-size: 11.300px; line-height: 20px; color: #333; -webkit-mask-image: linear-gradient(90deg, #000 60%, transparent 110%); mask-image: linear-gradient(90deg, #000 60%, transparent 110%); }
.fav { overflow: hidden; }
.active-tab { position: relative; width: 60px; background: #f7f7f7; border-radius: 8px 8px 0 0; display: flex; align-items: center; padding-left: 7px; gap: 13px; color: #222; }
.active-tab::before, .active-tab::after { content: ""; position: absolute; bottom: 0; width: 6px; height: 6px; }
.active-tab::before { left: -6px; background: radial-gradient(circle at 0 0, transparent 6px, #f7f7f7 6px); }
.active-tab::after { right: -6px; background: radial-gradient(circle at 100% 0, transparent 6px, #f7f7f7 6px); }
.favbox { width: 16px; height: 16px; border-radius: 3px; background: #fff; display: grid; place-items: center; }
.newtab { width: 42px; padding: 5px 0 0 9px; color: #333; }
.winctl { flex: 1; display: flex; align-items: center; gap: 36px; padding-left: 54px; stroke-width: 1; }
.toolbar { height: 40px; flex: none; display: flex; align-items: center; padding-left: 18px; color: #222; }
.reload { margin-left: 26px; }
.address { width: 1459px; height: 32px; margin-left: 19px; background: #fff; border: 1px solid #cdcdcd; border-radius: 16px; display: flex; align-items: center; padding: 0 15px 0 18px; color: #555; }
.url { margin-left: 15px; flex: 1; color: #6f6f6f; font-size: 13.360px; }
.url b { font-weight: 400; color: #000; }
.star { margin-left: 23px; }
.exts { display: flex; width: 264px; margin-left: 6px; }
.exts span { width: 44px; display: grid; place-items: center; position: relative; }
.exts em { position: absolute; left: 24px; top: 10px; width: 12px; height: 12px; border-radius: 3px; background: #5c5c5c; color: #fff; font: 700 10px/12px "Noto Sans", sans-serif; text-align: center; }
.vsep { width: 1px; height: 16px; background: #ccc; margin-left: 2px; }
.more { margin-left: 17px; }
.copilot { margin-left: 22px; }

/* chat page */
.page { position: relative; margin: 0 4px 0 3px; height: 963px; flex: none; display: flex; background: #fff; border: 1px solid #ddd; border-top-color: #e9e9e9; border-radius: 8px; overflow: hidden; }
.side { width: 260px; background: #f9f9f9; display: flex; flex-direction: column; flex: none; }
.side-head { height: 54px; display: flex; align-items: center; padding-left: 21px; color: #5d5d5d; }
.find { margin-left: 135px; }
.new { margin-left: 20px; }
.side-body { display: flex; height: 850px; }
.list { width: 244px; padding-left: 12px; font-size: 13.250px; }
.gpt { height: 36px; display: flex; align-items: center; padding-left: 8px; }
.gpt:first-child { margin-top: 1px; }
.ring { width: 24px; height: 24px; margin-right: 10px; border: 1px solid #e5e5e5; border-radius: 50%; background: #fff; display: grid; place-items: center; color: #222; }
.ring.cube { color: #a8a8a8; }
.ring.four { border-color: transparent; background: none; color: #5d5d5d; }
h6 { margin: 0; padding: 31px 0 0 8px; height: 56px; font-size: 11.400px; line-height: 20px; font-weight: 600; }
.chat { width: 221px; height: 36px; display: flex; align-items: center; padding-left: 8px; border-radius: 8px; }
.chat span { width: 205px; overflow: hidden; line-height: 22px; }
.chat.sel { background: #e1e1e1; }
.chat.sel span { width: 187px; }
.chat.sel svg { color: #666; }
.sb, .pagesb { display: flex; flex-direction: column; align-items: center; width: 9px; }
.up, .dn { border: 4.500px solid transparent; width: 0; height: 0; }
.up { border-top: 0; border-bottom: 5px solid #ececec; }
.dn { border-bottom: 0; border-top: 5px solid #ececec; }
.thumb { width: 9px; background: #ececec; border-radius: 4.500px; }
.sb .up { margin-top: 11px; }
.sb .thumb { height: 477px; margin-top: 8px; }
.sb .dn { margin-top: 327px; }
.plus { display: flex; align-items: center; height: 50px; padding-left: 20px; }
.plus span { width: 28px; height: 28px; border: 1px solid #e3e3e3; border-radius: 50%; display: grid; place-items: center; margin-right: 8px; }
.chatmain { flex: 1; display: flex; flex-direction: column; }
.chat-head { height: 54px; display: flex; align-items: center; padding-left: 24px; color: #5d5d5d; }
.chat-head h1 { margin: 0; font-size: 16.900px; font-weight: 500; }
.chev { margin-left: 6px; color: #a9a9a9; }
.share { margin-left: auto; width: 136px; height: 38px; border: 1px solid #dcdcdc; border-radius: 19px; background: #fff; font: 600 12.800px "Noto Sans", sans-serif; color: #0d0d0d; display: flex; align-items: center; padding: 0 0 0 15px; gap: 7px; }
.avatar { width: 32px; height: 32px; margin: 0 34px 0 12px; border-radius: 50%; background: #c2185b; color: #fff; display: grid; place-items: center; font-size: 16px; }
.composer { width: 744px; height: 104px; margin: 771px 0 0 466px; padding: 20px 10px 0 18px; background: #f3f3f3; border-radius: 0 0 24px 24px; }
.composer p { margin: 0; font-size: 15.050px; line-height: 24px; color: #6b6b6b; }
.crow { display: flex; align-items: center; gap: 16px; height: 32px; margin: 18px 0 0 -3px; }
.crow svg:first-child { margin-right: -1px; }
.voice { margin-left: auto; width: 32px; height: 32px; border-radius: 50%; background: #000; display: grid; place-items: center; }
.note { text-align: center; width: 410px; margin: 6px 0 0 621px; font-size: 11.230px; line-height: 22px; color: #5d5d5d; }
.qm { position: absolute; right: 11px; bottom: 12px; width: 24px; height: 24px; border: 1px solid #e3e3e3; border-radius: 50%; display: grid; place-items: center; font-size: 11.400px; color: #5d5d5d; }
.pagesb { position: absolute; right: 2px; top: 9px; }
.pagesb .thumb { height: 57px; margin-top: 702px; }
.pagesb .dn { margin-top: 45px; }

/* notes window */
.win { position: absolute; left: 448px; top: 120px; width: 1024px; height: 800px; display: flex; background: #fff; box-shadow: 0 2px 12px rgba(0,0,0,.3), 0 0 2px rgba(0,0,0,.25); color: #222; font-size: 12.400px; }
.wl { width: 344px; border-right: 1px solid #e0e0e0; display: flex; flex-direction: column; }
.wl-head { height: 40px; border-bottom: 1px solid #e0e0e0; background: #fcfcfc; display: flex; align-items: center; color: #707070; }
.wl-head span { display: grid; place-items: center; height: 25px; }
.c0 { width: 44px; }
.c1 { width: 34px; margin-left: 8px; background: #e9e9e9; border-radius: 4px; color: #222; }
.c2 { width: 34px; margin-left: 3px; }
.c3 { width: 34px; margin-left: 3px; }
.wl-body { flex: 1; display: flex; background: #f6f6f6; }
.ribbon { width: 44px; border-right: 1px solid #e0e0e0; display: flex; flex-direction: column; align-items: center; gap: 16px; padding-top: 13px; color: #707070; }
.files { flex: 1; display: flex; flex-direction: column; }
.acts { display: flex; gap: 14px; padding: 12px 0 0 93px; height: 45px; color: #707070; }
.trow { height: 25px; margin: 1px 11px 1px 12px; padding-left: 5px; display: flex; align-items: center; gap: 5px; color: #5c5c5c; border-radius: 4px; }
.trow svg { color: #ababab; }
.trow.on { background: linear-gradient(#c0c0c0, #c0c0c0) 12px 0 / 1px 100% no-repeat, #e3e3e3; padding-left: 41px; color: #222; }
.vault { margin-top: auto; height: 43px; border-top: 1px solid #e0e0e0; display: flex; align-items: center; padding: 0 13px 0 17px; color: #707070; gap: 13px; }
.vault span { flex: 1; color: #222; font-weight: 500; margin-left: -4px; }
.ud { color: #ababab; }
.wr { flex: 1; display: flex; flex-direction: column; position: relative; }
.wr-head { height: 40px; display: flex; background: #fcfcfc; }
.lead { width: 17px; border-bottom: 1px solid #e0e0e0; }
.otab { width: 202px; margin-top: 6px; height: 34px; background: #fff; border: 1px solid #e0e0e0; border-bottom: 0; border-radius: 6px 6px 0 0; display: flex; align-items: center; justify-content: space-between; padding: 0 8px 2px 9px; }
.otab svg { color: #5c5c5c; }
.rest { flex: 1; border-bottom: 1px solid #e0e0e0; display: flex; align-items: center; color: #707070; }
.np { margin-left: 9px; }
.ch { margin-left: 245px; }
.pr { margin: 0 7px 0 14px; }
.wc { width: 44px; display: grid; place-items: center; stroke-width: 1; }
.vh { height: 37px; display: flex; align-items: center; justify-content: space-between; padding: 0 18px; }
.nav { display: flex; gap: 12px; color: #bdbdbd; width: 60px; }
.crumb { color: #5c5c5c; font-size: 12.500px; padding-left: 3px; }
.crumb s { text-decoration: none; color: #ababab; margin: 0 1px; }
.crumb b { font-weight: 400; color: #222; }
.va { width: 60px; display: flex; justify-content: flex-end; gap: 12px; color: #707070; }
.doc { padding-left: 32px; }
u { text-decoration: none; padding-bottom: 2px; background: url("data:image/svg+xml,%3Csvg xmlns='http://www.w3.org/2000/svg' width='5.500' height='5' viewBox='0 0 5.500 5'%3E%3Cpath d='M-.5 4.400 0 4 2.750 1.200 5.500 4 6 4.400' fill='none' stroke='%23f22' stroke-width='1.100'/%3E%3C/svg%3E") left bottom / 5.500px 5px repeat-x; }
.doc h1 { margin: 32px 0 0; font-size: 27.100px; line-height: 40px; font-weight: 700; }
.doc h1.w { margin-top: 27px; }
h1 u { background-position: left 0 bottom 4px; }
h2 u { background-position: left 0 bottom 3px; }
.para { margin: 20px 0 0; font-size: 15.100px; line-height: 24px; }
.para a { color: #8a5cf5; text-decoration: underline; text-underline-offset: 3px; letter-spacing: -.1px; }
.ext { display: inline-block; vertical-align: -1px; margin: 0 1px 0 3px; color: #888; }
.doc h2 { margin: 41px 0 0; font-size: 23.700px; line-height: 36px; font-weight: 500; }
ul { list-style: none; margin: 20px 0 0; padding: 0 0 0 23px; }
li { position: relative; height: 26.400px; line-height: 26.400px; font-size: 15.100px; display: flex; align-items: center; }
li::before { content: ""; position: absolute; left: -10px; top: 10px; width: 5px; height: 5px; border-radius: 50%; background: #ababab; }
li span { margin-left: 6px; }
code { font: 12.800px/20px "DejaVu Sans Mono", "Liberation Mono", monospace; color: #5c5c5c; background: #fafafa; border-radius: 4px; padding: 1px 3px 0; height: 20px; display: inline-block; white-space: pre; }
.doc h2.pl { margin-top: 40px; }
.block { margin: 20px 0 0 15px; border-left: 1px solid #e0e0e0; padding-left: 20px; }
.line { height: 24px; display: flex; align-items: center; }
.nest { border-left: 1px solid #e0e0e0; margin-left: 15px; padding-left: 20px; }
.caret { display: block; width: 1px; height: 21px; background: #000; margin-top: 1px; }
.docsb { position: absolute; right: 3px; top: 81px; width: 7px; height: 518px; border-radius: 4px; background: #e6e6e6; }
.status { position: absolute; right: 0; bottom: 0; width: 252px; height: 27px; background: #f6f6f6; border: 1px solid #e0e0e0; border-width: 1px 0 0 1px; border-radius: 8px 0 0 0; display: flex; align-items: center; padding: 0 0 0 8px; font-size: 11.200px; color: #5c5c5c; }
.links { width: 70px; }
.words { margin-left: 12px; width: 57px; }

/* taskbar */
.taskbar { position: relative; margin-top: 3px; height: 40px; display: flex; background: linear-gradient(90deg, #1c1c1c 0, #1c1c1c 390px, #212629 480px, #1f2628 1000px, #1d2527 1300px, #1c2022 1500px, #1c1c1c 1560px); color: #fff; }
.tb { width: 48px; height: 40px; display: grid; place-items: center; margin-right: 1px; }
.start { margin-right: 3px; }
.run { background: linear-gradient(#76b9ed, #76b9ed) center bottom / 40px 2px no-repeat; }
.cur { background: linear-gradient(#76b9ed, #76b9ed) center bottom / 48px 2px no-repeat, #4b4b4b; }
.tray { margin-left: auto; display: flex; align-items: center; }
.mic { margin-left: 10px; }
.sync { margin-left: 10px; }
.net { margin-left: 7px; }
.vol { margin-left: 8px; }
.kb { margin-left: 8px; }
.lang, .clock { font-size: 11.400px; line-height: 18px; text-align: center; }
.lang { width: 28px; margin-left: 8px; }
.clock { width: 60px; margin-left: 10px; }
.notif { margin-left: 17px; }
.peek { width: 1px; height: 40px; margin: 0 4px 0 20px; background: #666; }
</style>
